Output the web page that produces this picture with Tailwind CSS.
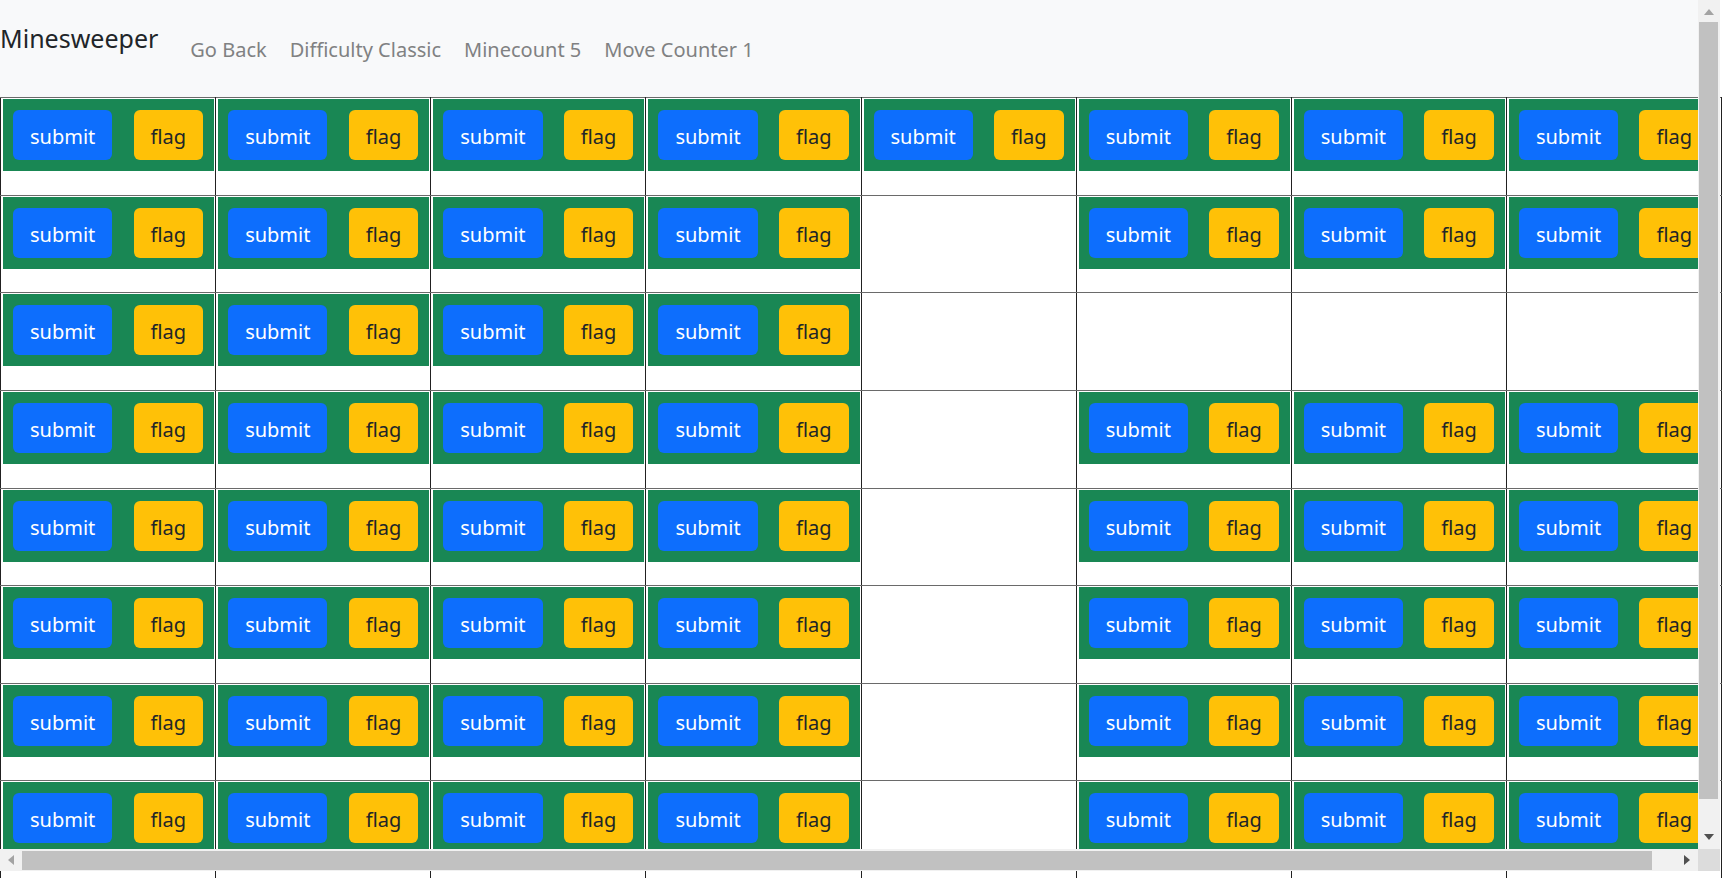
<!DOCTYPE html>
<html lang="en">
<head>
<meta charset="utf-8">
<title>Minesweeper</title>
<script src="https://cdn.jsdelivr.net/npm/@tailwindcss/browser@4"></script>
</head>
<body class="bg-white text-[#212529]" style="font-family:'Noto Sans','Open Sans',sans-serif">
<div class="relative h-screen overflow-hidden">
  <header class="mr-0.5 flex h-[97px] items-start bg-[#f8f9fa]">
    <h1 class="pt-5 text-[25px] leading-9">Minesweeper</h1>
    <nav class="flex gap-[23px] pt-[36px] pl-8 text-[20px] leading-7 text-[#808182]">
      <a href="#">Go Back</a>
      <a href="#">Difficulty Classic</a>
      <a href="#">Minecount 5</a>
      <a href="#">Move Counter 1</a>
    </nav>
  </header>

  <table class="h-[782px] w-full table-fixed border-collapse">
    <tbody id="board"></tbody>
  </table>

  <template id="hidden-cell">
    <td class="border border-x-[#212121] border-y-[#6a6a6a] pt-px pr-px pb-0 pl-0.5 align-top">
      <div class="flex justify-between bg-[#198754] py-[11px] pr-[11px] pl-2.5">
        <button type="button" class="h-[50px] rounded-md bg-[#0d6efd] px-[17px] pt-1 text-[20px] leading-7 text-white">submit</button>
        <button type="button" class="h-[50px] rounded-md bg-[#ffc107] px-[17px] pt-1 text-[20px] leading-7 text-[#212529]">flag</button>
      </div>
    </td>
  </template>
  <template id="open-cell">
    <td class="border border-x-[#212121] border-y-[#6a6a6a]"></td>
  </template>

  <!-- Scroll bars of the board frame -->
  <div class="pointer-events-none absolute inset-0 right-0.5 bottom-[7px] grid grid-cols-[1fr_22px] grid-rows-[1fr_22px]">
    <div></div>
    <div class="flex flex-col bg-[#f1f1f1]">
      <button type="button" aria-label="Scroll up" class="flex h-[22px] items-center justify-center">
        <svg width="10" height="6" viewBox="0 0 10 6" class="mt-px"><path d="M0 6 5 0l5 6z" fill="#a3a3a3"/></svg>
      </button>
      <div class="mr-0.5 ml-px flex-1 bg-[#c1c1c1]"></div>
      <div class="h-[28px]"></div>
      <button type="button" aria-label="Scroll down" class="flex h-[22px] items-start justify-center pt-[7px]">
        <svg width="10" height="6" viewBox="0 0 10 6"><path d="M0 0h10L5 6z" fill="#505050"/></svg>
      </button>
    </div>
    <div class="flex bg-[#f1f1f1]">
      <button type="button" aria-label="Scroll left" class="flex w-[22px] items-center justify-center">
        <svg width="6" height="10" viewBox="0 0 6 10"><path d="M6 0v10L0 5z" fill="#a3a3a3"/></svg>
      </button>
      <div class="mt-0.5 mb-px flex-1 bg-[#c1c1c1]"></div>
      <div class="w-[24px]"></div>
      <button type="button" aria-label="Scroll right" class="flex w-[22px] items-center justify-center">
        <svg width="6" height="10" viewBox="0 0 6 10"><path d="M0 0v10l6-5z" fill="#505050"/></svg>
      </button>
    </div>
    <div class="bg-[#dcdcdc]"></div>
  </div>
</div>

<script>
  // "#" is a hidden cell, "." an opened one
  const rows = [
    "########",
    "####.###",
    "####....",
    "####.###",
    "####.###",
    "####.###",
    "####.###",
    "####.###",
  ];
  const board = document.getElementById("board");
  const hidden = document.getElementById("hidden-cell").content;
  const open = document.getElementById("open-cell").content;
  for (const row of rows) {
    const tr = document.createElement("tr");
    for (const c of row) tr.append((c === "#" ? hidden : open).cloneNode(true));
    board.append(tr);
  }
</script>
</body>
</html>
